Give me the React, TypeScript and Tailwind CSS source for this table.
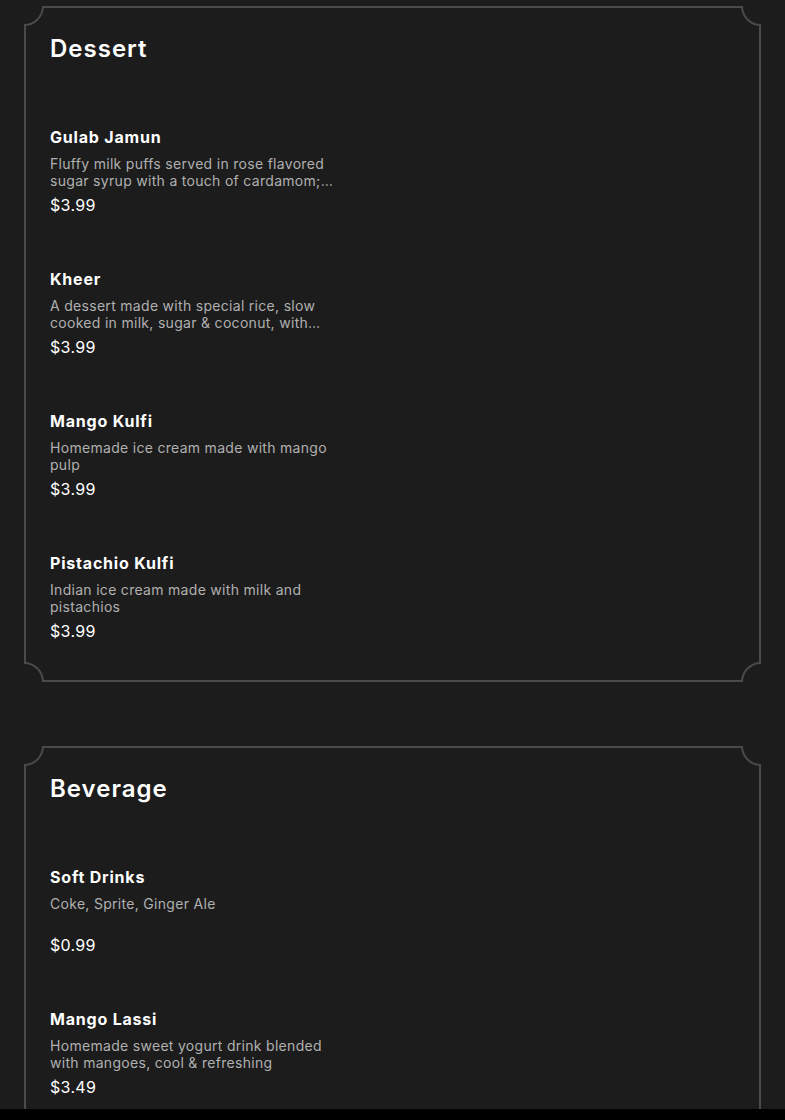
type MenuItem = {
  name: string;
  description: string;
  price: string;
};

const sections: { title: string; items: MenuItem[] }[] = [
  {
    title: "Dessert",
    items: [
      {
        name: "Gulab Jamun",
        description:
          "Fluffy milk puffs served in rose flavored sugar syrup with a touch of cardamom; served warm",
        price: "$3.99",
      },
      {
        name: "Kheer",
        description:
          "A dessert made with special rice, slow cooked in milk, sugar & coconut, with cardamom and nuts",
        price: "$3.99",
      },
      {
        name: "Mango Kulfi",
        description: "Homemade ice cream made with mango pulp",
        price: "$3.99",
      },
      {
        name: "Pistachio Kulfi",
        description: "Indian ice cream made with milk and pistachios",
        price: "$3.99",
      },
    ],
  },
  {
    title: "Beverage",
    items: [
      { name: "Soft Drinks", description: "Coke, Sprite, Ginger Ale", price: "$0.99" },
      {
        name: "Mango Lassi",
        description: "Homemade sweet yogurt drink blended with mangoes, cool & refreshing",
        price: "$3.49",
      },
    ],
  },
];

function Corner({ className }: { className: string }) {
  return (
    <span
      className={
        "absolute h-10 w-10 rounded-full border-2 border-[#4a4a4a] bg-[#1c1c1c] " + className
      }
    />
  );
}

function Section({ title, items }: { title: string; items: MenuItem[] }) {
  return (
    <section className="relative overflow-hidden">
      <div className="border-2 border-[#4a4a4a] px-6 pt-[25px] pb-[39px]">
        <h2 className="text-[24px] leading-8 font-semibold tracking-[1px] text-white">{title}</h2>
        <div className="mt-[62px] flex flex-col gap-[54px]">
          {items.map((item) => (
            <div key={item.name} className="flex w-[300px] flex-col">
              <h3 className="text-[16px] leading-5 font-bold tracking-[0.8px] text-white">
                {item.name}
              </h3>
              <p className="mt-2 h-[34px] line-clamp-2 text-[14px] leading-[17px] text-[#b0b0b0]">
                {item.description}
              </p>
              <p className="mt-[6px] text-[16px] leading-5 text-white">{item.price}</p>
            </div>
          ))}
        </div>
      </div>
      <Corner className="-top-5 -left-5" />
      <Corner className="-top-5 -right-5" />
      <Corner className="-bottom-5 -left-5" />
      <Corner className="-bottom-5 -right-5" />
    </section>
  );
}

export default function App() {
  return (
    <div className="h-[1120px] bg-black">
      <div
        className="h-[1109px] overflow-hidden bg-[#1c1c1c] tracking-[0.3px]"
        style={{ fontFamily: "Inter, 'Noto Sans', sans-serif" }}
      >
        <div className="mx-6 flex flex-col gap-16 pt-[6px]">
          {sections.map((s) => (
            <Section key={s.title} title={s.title} items={s.items} />
          ))}
        </div>
      </div>
    </div>
  );
}
